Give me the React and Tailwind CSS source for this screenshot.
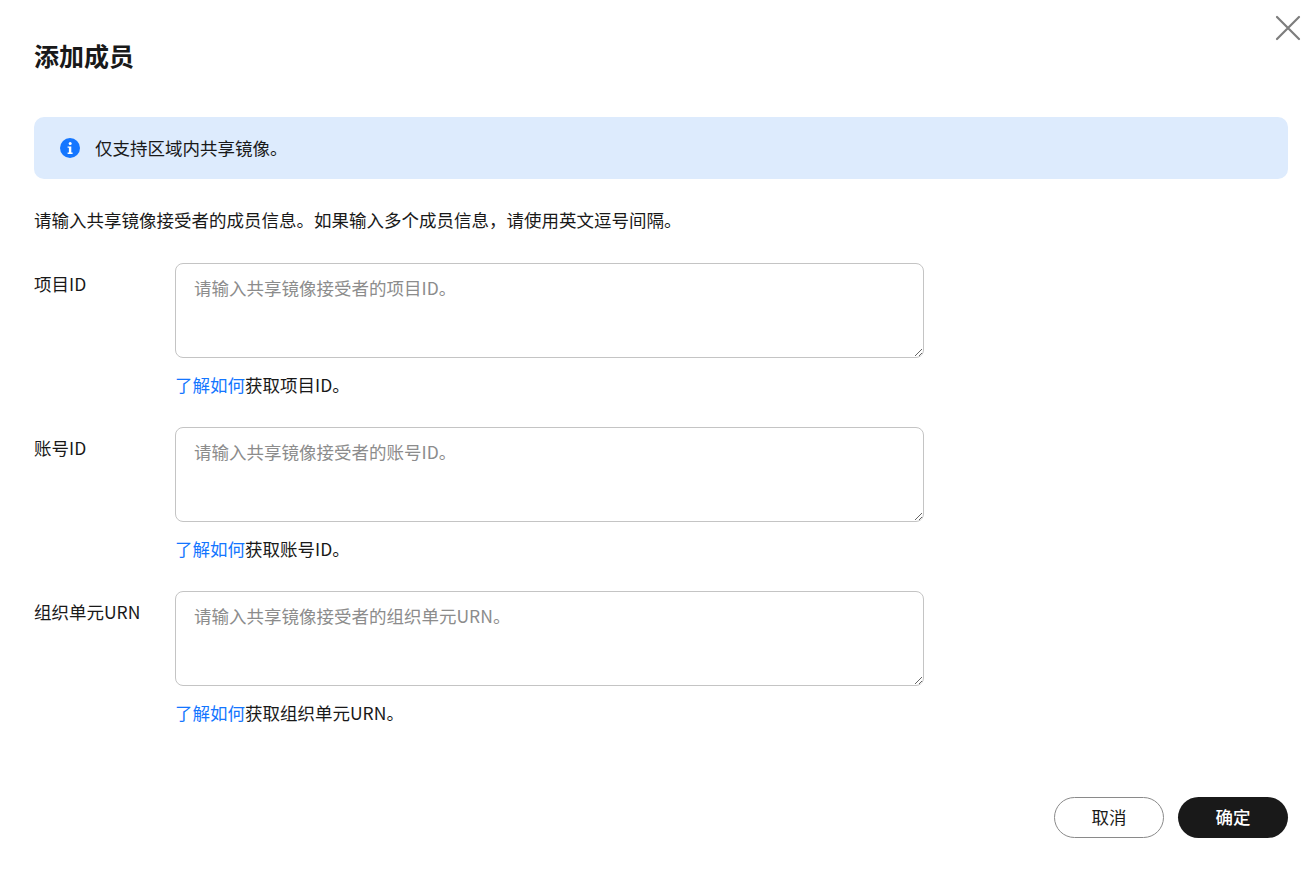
import React from "react";

const FONT = { fontFamily: '"Noto Sans CJK SC", "Noto Sans", sans-serif' };

function InfoIcon() {
  return (
    <svg width="20" height="20" viewBox="0 0 20 20" className="shrink-0">
      <circle cx="10" cy="10" r="10" fill="#1476ff" />
      <circle cx="10.2" cy="5.6" r="1.5" fill="#fff" />
      <path d="M7.6 8.4h3.7v6.2h1.3v1.3H7.6v-1.3h1.3V9.7H7.6z" fill="#fff" />
    </svg>
  );
}

function CloseIcon() {
  return (
    <svg width="26" height="26" viewBox="0 0 26 26">
      <path d="M2 2L24 24M24 2L2 24" stroke="#7d7d7d" strokeWidth="2.2" strokeLinecap="round" />
    </svg>
  );
}

function Row({ label, placeholder, help, last }) {
  return (
    <div className={last ? "" : "mb-[30px]"}>
      <div className="flex">
        <div className="w-[141px] shrink-0 pt-[9px] text-[17.5px] leading-[24px] text-[#191919]">{label}</div>
        <textarea
          className="block w-[749px] h-[95px] border border-[#c4c4c4] rounded-[8px] px-[18px] py-[12px] text-[17.5px] leading-[24px] text-[#191919] placeholder:text-[#8c8c8c] outline-none resize-y"
          style={FONT}
          placeholder={placeholder}
        />
      </div>
      <div className="pl-[141px] mt-[15px] text-[17.5px] leading-[24px] text-[#191919]">
        <span className="text-[#1476ff]">了解如何</span>
        {help}
      </div>
    </div>
  );
}

export default function App() {
  return (
    <div className="w-[1313px] h-[877px] bg-white relative overflow-hidden" style={FONT}>
      <button className="absolute left-[1275px] top-[15px]">
        <CloseIcon />
      </button>
      <div className="pl-[34px] pr-[25px]">
        <div className="pt-[39px] h-[71px] text-[25px] leading-[32px] font-bold text-[#191919]">添加成员</div>
        <div className="mt-[46px] h-[62px] rounded-[10px] bg-[#ddebfd] flex items-center pl-[26px] gap-[15px]">
          <InfoIcon />
          <span className="text-[17.5px] leading-[24px] text-[#191919]">仅支持区域内共享镜像。</span>
        </div>
        <div className="mt-[29px] text-[17.5px] leading-[24px] text-[#191919]">
          请输入共享镜像接受者的成员信息。如果输入多个成员信息，请使用英文逗号间隔。
        </div>
        <div className="mt-[31px]">
          <Row label="项目ID" placeholder="请输入共享镜像接受者的项目ID。" help="获取项目ID。" />
          <Row label="账号ID" placeholder="请输入共享镜像接受者的账号ID。" help="获取账号ID。" />
          <Row label="组织单元URN" placeholder="请输入共享镜像接受者的组织单元URN。" help="获取组织单元URN。" last />
        </div>
        <div className="mt-[72px] flex justify-end gap-[14px]">
          <button className="w-[110px] h-[41px] rounded-full border border-[#8a8a8a] bg-white text-[17.5px] text-[#191919]" style={FONT}>
            取消
          </button>
          <button className="w-[110px] h-[41px] rounded-full bg-[#191919] text-[17.5px] text-white font-medium" style={FONT}>
            确定
          </button>
        </div>
      </div>
    </div>
  );
}
